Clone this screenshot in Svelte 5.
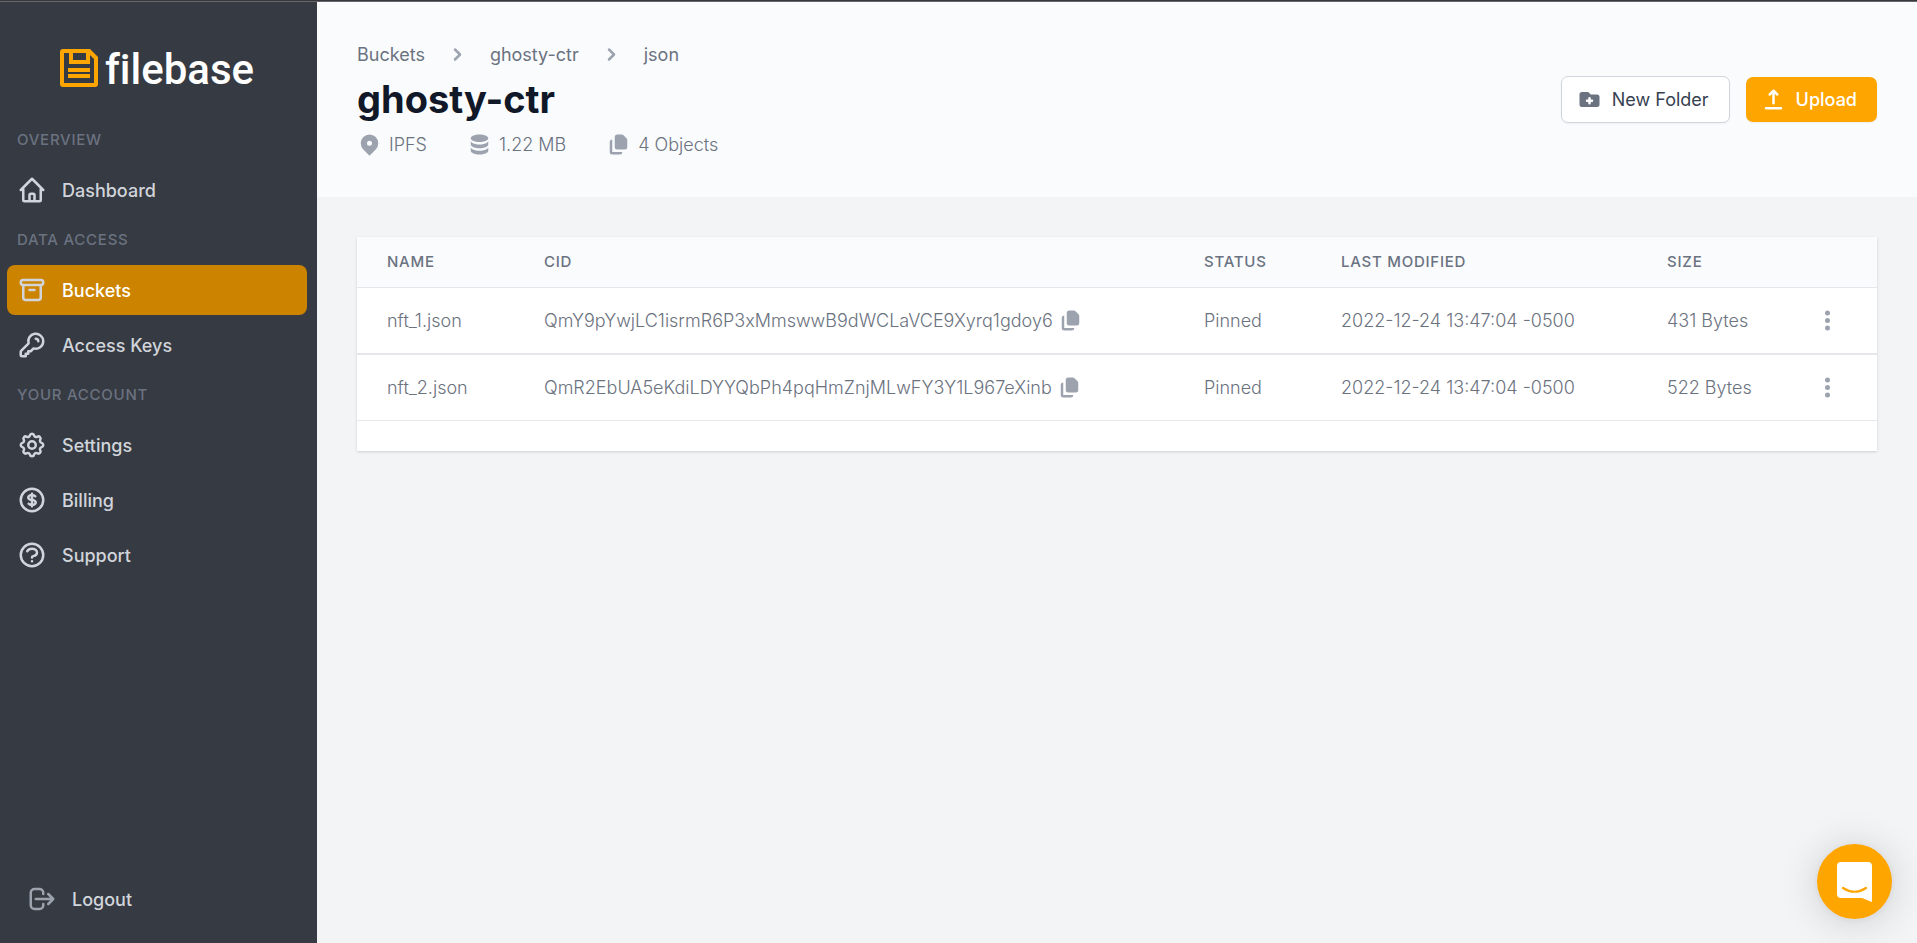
<script>
  const sections = [
    {
      title: 'Overview',
      items: [
        {
          label: 'Dashboard',
          icon: 'M3 12l2-2m0 0l7-7 7 7M5 10v10a1 1 0 001 1h3m10-11l2 2m-2-2v10a1 1 0 01-1 1h-3m-6 0a1 1 0 001-1v-4a1 1 0 011-1h2a1 1 0 011 1v4a1 1 0 001 1m-6 0h6'
        }
      ]
    },
    {
      title: 'Data Access',
      items: [
        {
          label: 'Buckets',
          active: true,
          icon: 'M5 8h14M5 8a2 2 0 110-4h14a2 2 0 110 4M5 8v10a2 2 0 002 2h10a2 2 0 002-2V8m-9 4h4'
        },
        {
          label: 'Access Keys',
          icon: 'M15 7a2 2 0 012 2m4 0a6 6 0 01-7.743 5.743L11 17H9v2H7v2H4a1 1 0 01-1-1v-2.586a1 1 0 01.293-.707l5.964-5.964A6 6 0 1121 9z'
        }
      ]
    },
    {
      title: 'Your Account',
      items: [
        {
          label: 'Settings',
          icon: 'M10.325 4.317c.426-1.756 2.924-1.756 3.35 0a1.724 1.724 0 002.573 1.066c1.543-.94 3.31.826 2.37 2.37a1.724 1.724 0 001.065 2.572c1.756.426 1.756 2.924 0 3.35a1.724 1.724 0 00-1.066 2.573c.94 1.543-.826 3.31-2.37 2.37a1.724 1.724 0 00-2.572 1.065c-.426 1.756-2.924 1.756-3.35 0a1.724 1.724 0 00-2.573-1.066c-1.543.94-3.31-.826-2.37-2.37a1.724 1.724 0 00-1.065-2.572c-1.756-.426-1.756-2.924 0-3.35a1.724 1.724 0 001.066-2.573c-.94-1.543.826-3.31 2.37-2.37.996.608 2.296.07 2.572-1.065zM15 12a3 3 0 11-6 0 3 3 0 016 0z'
        },
        {
          label: 'Billing',
          icon: 'M12 8c-1.657 0-3 .895-3 2s1.343 2 3 2 3 .895 3 2-1.343 2-3 2m0-8c1.11 0 2.08.402 2.599 1M12 8V7m0 1v8m0 0v1m0-1c-1.11 0-2.08-.402-2.599-1M21 12a9 9 0 11-18 0 9 9 0 0118 0z'
        },
        {
          label: 'Support',
          icon: 'M8.228 9c.549-1.165 2.03-2 3.772-2 2.21 0 4 1.343 4 3 0 1.4-1.278 2.575-3.006 2.907-.542.104-.994.54-.994 1.093m0 3h.01M21 12a9 9 0 11-18 0 9 9 0 0118 0z'
        }
      ]
    }
  ];

  const logoutIcon =
    'M17 16l4-4m0 0l-4-4m4 4H7m6 4v1a3 3 0 01-3 3H6a3 3 0 01-3-3V7a3 3 0 013-3h4a3 3 0 013 3v1';

  const chevron =
    'M7.293 14.707a1 1 0 010-1.414L10.586 10 7.293 6.707a1 1 0 011.414-1.414l4 4a1 1 0 010 1.414l-4 4a1 1 0 01-1.414 0z';
  const copy =
    'M9 2a2 2 0 00-2 2v8a2 2 0 002 2h6a2 2 0 002-2V6.414A2 2 0 0016.414 5L14 2.586A2 2 0 0012.586 2H9z M3 8a2 2 0 012-2v10h8a2 2 0 01-2 2H5a2 2 0 01-2-2V8z';
  const dots =
    'M10 6a2 2 0 110-4 2 2 0 010 4zM10 12a2 2 0 110-4 2 2 0 010 4zM10 18a2 2 0 110-4 2 2 0 010 4z';
  const upload =
    'M3 17a1 1 0 011-1h12a1 1 0 110 2H4a1 1 0 01-1-1zM6.293 6.707a1 1 0 010-1.414l3-3a1 1 0 011.414 0l3 3a1 1 0 01-1.414 1.414L11 5.414V13a1 1 0 11-2 0V5.414L7.707 6.707a1 1 0 01-1.414 0z';

  const crumbs = ['Buckets', 'ghosty-ctr', 'json'];

  const facts = [
    {
      label: 'IPFS',
      icon: 'M5.05 4.05a7 7 0 119.9 9.9L10 18.9l-4.95-4.95a7 7 0 010-9.9zM10 11a2 2 0 100-4 2 2 0 000 4z'
    },
    {
      label: '1.22 MB',
      icon: 'M3 12v3c0 1.657 3.134 3 7 3s7-1.343 7-3v-3c0 1.657-3.134 3-7 3s-7-1.343-7-3z M3 7v3c0 1.657 3.134 3 7 3s7-1.343 7-3V7c0 1.657-3.134 3-7 3S3 8.657 3 7z M17 5c0 1.657-3.134 3-7 3S3 6.657 3 5s3.134-3 7-3 7 1.343 7 3z'
    },
    { label: '4 Objects', icon: copy }
  ];

  const files = [
    {
      name: 'nft_1.json',
      cid: 'QmY9pYwjLC1isrmR6P3xMmswwB9dWCLaVCE9Xyrq1gdoy6',
      status: 'Pinned',
      modified: '2022-12-24 13:47:04 -0500',
      size: '431 Bytes'
    },
    {
      name: 'nft_2.json',
      cid: 'QmR2EbUA5eKdiLDYYQbPh4pqHmZnjMLwFY3Y1L967eXinb',
      status: 'Pinned',
      modified: '2022-12-24 13:47:04 -0500',
      size: '522 Bytes'
    }
  ];
</script>

{#snippet solid(path)}
  <svg class="solid" viewBox="0 0 20 20" aria-hidden="true">
    <path fill="currentColor" fill-rule="evenodd" clip-rule="evenodd" d={path} />
  </svg>
{/snippet}

{#snippet outline(path)}
  <svg class="outline" viewBox="0 0 24 24" aria-hidden="true">
    <path d={path} fill="none" stroke="currentColor" stroke-width="2" stroke-linecap="round" stroke-linejoin="round" />
  </svg>
{/snippet}

<div class="app">
  <aside class="sidebar">
    <a class="logo" href="#home">
      <svg class="mark" viewBox="0 0 38 38" aria-hidden="true">
        <path
          fill="#ffa500"
          fill-rule="evenodd"
          d="M3 0H30L38 8V35a3 3 0 0 1-3 3H3a3 3 0 0 1-3-3V3a3 3 0 0 1 3-3ZM4 4V34H34V10L30 6V15H9V4ZM13 4V11H26V4Z"
        />
        <path fill="#ffa500" d="M8 19h22v4H8zM8 25h22v4H8z" />
      </svg>
      <span>filebase</span>
    </a>

    <nav>
      {#each sections as section}
        <h2>{section.title}</h2>
        <ul>
          {#each section.items as item}
            <li>
              <a class="item" class:active={item.active} href="#nav">
                {@render outline(item.icon)}
                <span>{item.label}</span>
              </a>
            </li>
          {/each}
        </ul>
      {/each}
    </nav>

    <a class="item logout" href="#logout">
      {@render outline(logoutIcon)}
      <span>Logout</span>
    </a>
  </aside>

  <main>
    <header>
      <div>
        <nav class="crumbs">
          {#each crumbs as crumb, i}
            {#if i > 0}{@render solid(chevron)}{/if}
            <a href="#crumb">{crumb}</a>
          {/each}
        </nav>
        <h1>ghosty-ctr</h1>
        <div class="facts">
          {#each facts as fact}
            <span class="fact">{@render solid(fact.icon)}{fact.label}</span>
          {/each}
        </div>
      </div>

      <div class="actions">
        <button class="btn plain" type="button">
          <svg class="solid" viewBox="0 0 20 20" aria-hidden="true">
            <path fill="currentColor" d="M2 6a2 2 0 012-2h5l2 2h5a2 2 0 012 2v6a2 2 0 01-2 2H4a2 2 0 01-2-2V6z" />
            <path d="M10 9v4M8 11h4" stroke="#fff" stroke-width="2" stroke-linecap="round" />
          </svg>
          New Folder
        </button>
        <button class="btn primary" type="button">{@render solid(upload)}Upload</button>
      </div>
    </header>

    <section class="card">
      <table>
        <colgroup>
          <col class="c-name" />
          <col />
          <col class="c-status" />
          <col class="c-modified" />
          <col class="c-size" />
          <col class="c-menu" />
        </colgroup>
        <thead>
          <tr>
            <th>Name</th>
            <th>CID</th>
            <th>Status</th>
            <th>Last Modified</th>
            <th>Size</th>
            <th></th>
          </tr>
        </thead>
        <tbody>
          {#each files as file}
            <tr>
              <td>{file.name}</td>
              <td>
                <div class="cid">
                  {file.cid}
                  <button class="icon" type="button" aria-label="Copy CID">{@render solid(copy)}</button>
                </div>
              </td>
              <td>{file.status}</td>
              <td>{file.modified}</td>
              <td>{file.size}</td>
              <td class="menu">
                <button class="icon" type="button" aria-label="Options">{@render solid(dots)}</button>
              </td>
            </tr>
          {/each}
        </tbody>
      </table>
    </section>
  </main>

  <button class="chat" type="button" aria-label="Open chat">
    <svg viewBox="0 0 35 40" aria-hidden="true">
      <path fill="#fff" d="M4 0H31a4 4 0 0 1 4 4V40L25 36H4a4 4 0 0 1-4-4V4a4 4 0 0 1 4-4Z" />
      <path d="M6 26Q17.500 33.500 29 26" fill="none" stroke="#ffa500" stroke-width="2.200" stroke-linecap="round" />
    </svg>
  </button>
</div>

<style>
  :global(body) {
    background: #f3f4f6;
  }

  .app {
    display: flex;
    box-sizing: border-box;
    min-height: 100vh;
    padding-top: 1px;
    border-top: 1px solid #36373c;
    background: #66666b;
    font-family: Inter, 'Liberation Sans', sans-serif;
    font-size: 18px;
    font-weight: 300;
    line-height: 25px;
    color: #6b7280;
  }

  a {
    color: inherit;
    text-decoration: none;
  }

  button {
    font: inherit;
    cursor: pointer;
  }

  .solid {
    flex: none;
    display: block;
    width: 25px;
    height: 25px;
  }

  .outline {
    flex: none;
    width: 30px;
    height: 30px;
  }

  .sidebar {
    flex: none;
    display: flex;
    flex-direction: column;
    box-sizing: border-box;
    width: 317px;
    padding: 41px 10px 19px 7px;
    background: #363a42;
  }

  .logo {
    display: flex;
    align-items: center;
    justify-content: center;
    gap: 7px;
    height: 50px;
    margin-bottom: 22px;
    font-family: Roboto, sans-serif;
    font-size: 42px;
    font-weight: 500;
    font-variant-ligatures: none;
    color: #fff;
  }

  .logo span {
    padding-top: 2px;
  }

  .mark {
    width: 38px;
    height: 38px;
  }

  h2 {
    margin: 0;
    padding: 12px 10px 13px;
    font-size: 15px;
    font-weight: 500;
    letter-spacing: 0.05em;
    text-transform: uppercase;
    color: #6b7280;
  }

  ul {
    display: flex;
    flex-direction: column;
    gap: 5px;
    margin: 0;
    padding: 0;
    list-style: none;
  }

  .item {
    display: flex;
    align-items: center;
    gap: 15px;
    padding: 10px;
    border-radius: 8px;
    font-weight: 500;
    color: #d1d5db;
  }

  .active {
    background: #cc8400;
  }

  .active span {
    color: #fff;
  }

  .logout {
    margin-top: auto;
    padding-left: 20px;
  }

  .logout svg {
    color: #9ca3af;
  }

  main {
    flex: 1;
    min-width: 0;
    background: #f3f4f6;
  }

  header {
    display: flex;
    align-items: center;
    justify-content: space-between;
    padding: 40px;
    background: #f9fbfd;
  }

  .crumbs {
    display: flex;
    gap: 20px;
    font-weight: 400;
  }

  .crumbs svg,
  .fact svg {
    color: #9ca3af;
  }

  h1 {
    margin: 10px 0;
    font-size: 38px;
    font-weight: 700;
    line-height: 45px;
    color: #111827;
  }

  .facts {
    display: flex;
    gap: 40px;
  }

  .fact {
    display: flex;
    gap: 7px;
  }

  .actions {
    display: flex;
    align-items: center;
    gap: 16px;
  }

  .btn {
    display: flex;
    align-items: center;
    gap: 10px;
    padding: 10px 20px 10px 15px;
    border: 0;
    border-radius: 7px;
    font-weight: 400;
    box-shadow: 0 1px 2px rgba(0, 0, 0, 0.05);
  }

  .plain {
    border: 1px solid #d1d5db;
    background: #fff;
    color: #374151;
  }

  .plain svg {
    color: #6b7280;
  }

  .primary {
    background: #ffa500;
    font-weight: 500;
    color: #fff;
  }

  .card {
    margin: 40px;
    padding-bottom: 30px;
    background: #fff;
    box-shadow: 0 1px 3px rgba(0, 0, 0, 0.1), 0 1px 2px rgba(0, 0, 0, 0.06);
  }

  table {
    width: 100%;
    table-layout: fixed;
    border-spacing: 0;
  }

  .c-name {
    width: 157px;
  }

  .c-status {
    width: 137px;
  }

  .c-modified {
    width: 326px;
  }

  .c-size {
    width: 143px;
  }

  .c-menu {
    width: 97px;
  }

  th {
    padding: 12px 0 13px 30px;
    background: #f9fbfd;
    font-size: 15px;
    font-weight: 500;
    letter-spacing: 0.05em;
    text-align: left;
    text-transform: uppercase;
  }

  td {
    padding: 20px 0 20px 30px;
    border: solid #e5e7eb;
    border-width: 1px 0;
    white-space: nowrap;
  }

  .cid {
    display: flex;
    gap: 5px;
  }

  .icon {
    display: block;
    padding: 0;
    border: 0;
    background: none;
    color: #9ca3af;
  }

  td.menu {
    padding: 20px 35px;
  }

  .chat {
    position: fixed;
    right: 25px;
    bottom: 24px;
    display: flex;
    align-items: center;
    justify-content: center;
    width: 75px;
    height: 75px;
    padding: 0;
    border: 0;
    border-radius: 50%;
    background: #ffa500;
    box-shadow: 0 1px 8px rgba(0, 0, 0, 0.06), 0 3px 40px rgba(0, 0, 0, 0.16);
  }

  .chat svg {
    width: 35px;
    height: 40px;
  }
</style>
